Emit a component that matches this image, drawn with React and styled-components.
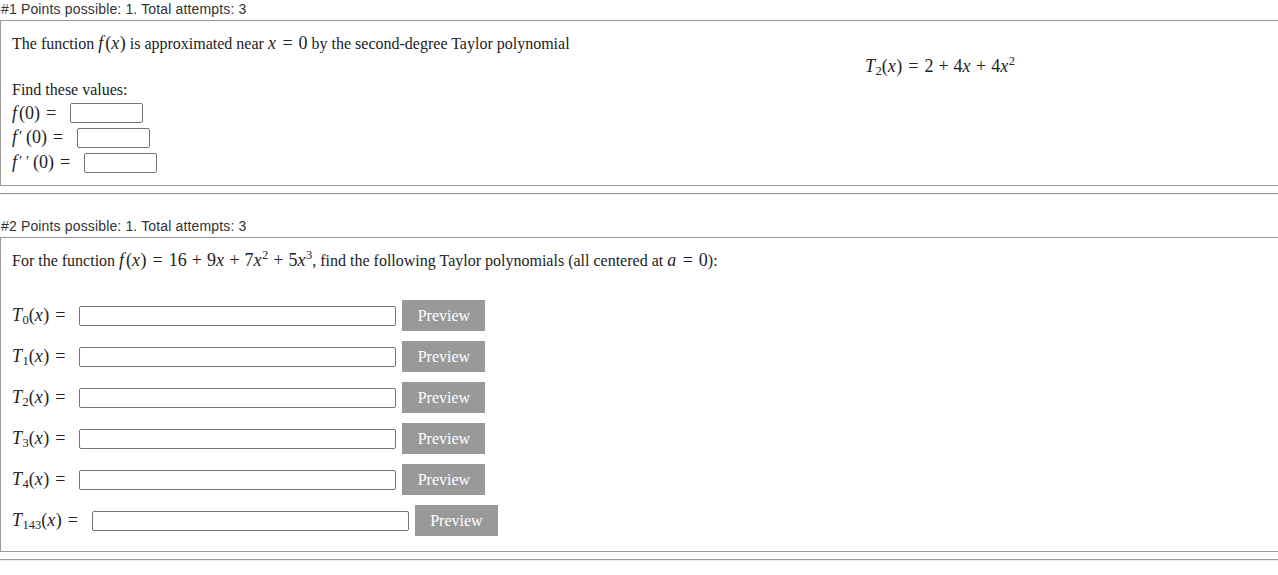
import styled, { createGlobalStyle } from "styled-components";

const GlobalStyle = createGlobalStyle`
  html, body {
    margin: 0;
    padding: 0;
    background: #fff;
    overflow: hidden;
  }
`;

const App = () => {
  return (
    <Page>
      <GlobalStyle />
      <Header>#1 Points possible: 1. Total attempts: 3</Header>
      <ProblemBox $top={13} $bottom={10}>
        <Line>
          The function{" "}
          <Math>
            <Fn>f</Fn>(<Mi>x</Mi>)
          </Math>{" "}
          is approximated near{" "}
          <Math>
            <Mi>x</Mi>
            <Rel>=</Rel>0
          </Math>{" "}
          by the second-degree Taylor polynomial
        </Line>
        <Display>
          <Math>
            <Mi>T</Mi>
            <Sub>2</Sub>(<Mi>x</Mi>)<Rel>=</Rel>2<Bin>+</Bin>4<Mi>x</Mi>
            <Bin>+</Bin>4<Mi>x</Mi>
            <Sup>2</Sup>
          </Math>
        </Display>
        <Line>Find these values:</Line>
        {[0, 1, 2].map((primes) => (
          <ValueRow key={primes}>
            <Math>
              <Fn>f</Fn>
              {Array.from({ length: primes }, (_, i) => (
                <Prime key={i}>′</Prime>
              ))}
              (0)<Rel>=</Rel>
            </Math>
            <SmallInput />
          </ValueRow>
        ))}
      </ProblemBox>
      <Rule />
      <Spacer />
      <Header>#2 Points possible: 1. Total attempts: 3</Header>
      <ProblemBox $top={13} $bottom={15}>
        <Line>
          For the function{" "}
          <Math>
            <Fn>f</Fn>(<Mi>x</Mi>)<Rel>=</Rel>16<Bin>+</Bin>9<Mi>x</Mi>
            <Bin>+</Bin>7<Mi>x</Mi>
            <Sup>2</Sup>
            <Bin>+</Bin>5<Mi>x</Mi>
            <Sup>3</Sup>
          </Math>
          , find the following Taylor polynomials (all centered at{" "}
          <Math>
            <Mi>a</Mi>
            <Rel>=</Rel>0
          </Math>
          ):
        </Line>
        <Rows>
          {["0", "1", "2", "3", "4", "143"].map((n) => (
            <PolyRow key={n}>
              <Math>
                <Mi>T</Mi>
                <Sub>{n}</Sub>(<Mi>x</Mi>)<Rel>=</Rel>
              </Math>
              <WideInput />
              <PreviewButton>Preview</PreviewButton>
            </PolyRow>
          ))}
        </Rows>
      </ProblemBox>
      <Rule />
    </Page>
  );
};

const Page = styled.div`
  display: flex;
  flex-direction: column;
  width: 1900px;
  font-family: "Liberation Serif", "Times New Roman", serif;
  color: #222;
`;

const Header = styled.div`
  font-family: "Liberation Sans", Arial, sans-serif;
  font-size: 14px;
  letter-spacing: 0.15px;
  line-height: 18px;
  color: #333;
  height: 20px;
  padding-left: 1px;
`;

const ProblemBox = styled.div`
  border: 1px solid #999;
  padding: ${(p) => p.$top}px 11px ${(p) => p.$bottom}px 11px;
  display: flex;
  flex-direction: column;
`;

const Line = styled.div`
  font-size: 16px;
  line-height: 20px;
  height: 20px;
  white-space: nowrap;
`;

const Display = styled.div`
  font-size: 16px;
  line-height: 22px;
  height: 22px;
  margin: 2px 0 2px;
  padding-left: 853px;
  white-space: nowrap;
`;

const Math = styled.span`
  font-family: "Liberation Serif", "Times New Roman", serif;
  font-size: 18px;
  line-height: 16px;
  white-space: nowrap;
`;

const Mi = styled.span`
  font-style: italic;
  margin-right: 0.5px;
`;

const Fn = styled(Mi)`
  margin-right: 2px;
`;

const Prime = styled.span`
  display: inline-block;
  width: 7px;
  font-size: 15px;
  position: relative;
  top: -2px;
`;

const Rel = styled.span`
  margin: 0 6px;
`;

const Bin = styled.span`
  margin: 0 5px;
`;

const Sub = styled.span`
  font-size: 12.5px;
  position: relative;
  top: 3px;
`;

const Sup = styled.span`
  font-size: 12.5px;
  position: relative;
  top: -7px;
`;

const ValueRow = styled.div`
  display: flex;
  align-items: center;
  height: 25px;
  flex-shrink: 0;
`;

const SmallInput = styled.input`
  box-sizing: border-box;
  flex: none;
  width: 73px;
  height: 20px;
  margin-left: 8px;
  border: 1px solid #767676;
  border-radius: 2px;
`;

const Rows = styled.div`
  display: flex;
  flex-direction: column;
  gap: 10px;
  margin-top: 29px;
`;

const PolyRow = styled.div`
  display: flex;
  align-items: center;
  height: 31px;
  flex-shrink: 0;
  & > ${Math} {
    margin-right: 8px;
  }
`;

const WideInput = styled.input`
  box-sizing: border-box;
  flex: none;
  width: 317px;
  height: 20px;
  border: 1px solid #767676;
  border-radius: 2px;
`;

const PreviewButton = styled.button`
  flex: none;
  margin-left: 6px;
  width: 83px;
  height: 31px;
  background: #999;
  border: none;
  color: #fff;
  font-family: "Liberation Serif", "Times New Roman", serif;
  font-size: 16px;
`;

const Rule = styled.hr`
  margin: 7px 0 0;
  border: none;
  border-top: 1px solid #999;
  border-bottom: 1px solid #eee;
  height: 0;
`;

const Spacer = styled.div`
  height: 22px;
`;

export default App;
